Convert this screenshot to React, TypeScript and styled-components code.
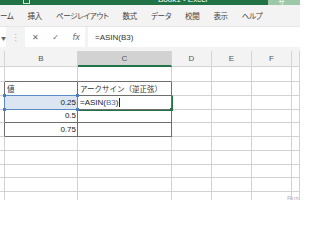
import React from 'react';
import styled, { createGlobalStyle, css } from 'styled-components';

const GlobalStyle = createGlobalStyle`
  html, body {
    margin: 0;
    padding: 0;
    background: #ffffff;
  }
  body {
    font-family: "Noto Sans CJK JP", "Liberation Sans", sans-serif;
  }
`;

const Window = styled.div`
  width: 300px;
  height: 200px;
  position: relative;
  overflow: hidden;
  background: #ffffff;
`;

const TitleBar = styled.div`
  height: 5px;
  background: #217346;
  display: flex;
  align-items: flex-end;
  overflow: hidden;
`;

const QuickIcon = styled.div`
  margin-left: 23px;
  width: 7px;
  height: 9px;
  border: 1px solid #cfe3d6;
  box-sizing: border-box;
  margin-bottom: 1px;
`;

const TitleText = styled.div`
  margin-left: 128px;
  color: #ffffff;
  font-size: 8px;
  line-height: 8px;
  margin-bottom: 1px;
  font-family: "Liberation Sans", sans-serif;
  white-space: nowrap;
`;

const SignIn = styled.div`
  margin-left: auto;
  width: 32px;
  height: 5px;
  background: #9cc7a9;
  color: #ffffff;
  font-size: 7px;
  line-height: 4px;
  padding-left: 10px;
  box-sizing: border-box;
  overflow: hidden;
`;

const TabBar = styled.div`
  height: 21px;
  background: #f3f3f3;
  display: flex;
  align-items: center;
  gap: 14px;
  margin-left: -7px;
`;

const Tab = styled.span`
  font-size: 7.5px;
  color: #444444;
  font-feature-settings: "palt";
  white-space: nowrap;
  letter-spacing: -0.3px;
`;

const FormulaBar = styled.div`
  height: 21px;
  background: #f3f3f3;
  border-top: 1px solid #e6e6e6;
  display: flex;
  align-items: flex-start;
  padding-top: 0;
`;

const NameBox = styled.div`
  width: 6px;
  height: 20px;
  background: #ffffff;
  display: flex;
  align-items: center;
  justify-content: flex-end;
  color: #666;
  font-size: 5px;
`;

const Grip = styled.div`
  width: 19px;
  height: 20px;
  display: flex;
  align-items: center;
  justify-content: center;
  color: #b0b0b0;
  font-size: 8px;
  font-family: "DejaVu Sans", sans-serif;
`;

const FnBox = styled.div`
  width: 60px;
  height: 20px;
  background: #ffffff;
  display: flex;
  align-items: center;
  justify-content: space-between;
  padding: 0 5px 0 7px;
  box-sizing: border-box;
  color: #6a6a6a;
`;

const FnGlyph = styled.span<{ $italic?: boolean }>`
  font-size: 8px;
  font-family: "DejaVu Sans", sans-serif;
  font-style: ${p => (p.$italic ? 'italic' : 'normal')};
`;

const FormulaInput = styled.div`
  margin-left: 3px;
  flex: 1;
  height: 20px;
  background: #ffffff;
  display: flex;
  align-items: center;
  padding-left: 7px;
  font-family: "Liberation Sans", sans-serif;
  font-size: 8px;
  color: #333333;
`;

const Gap = styled.div`
  height: 3px;
  background: #f3f3f3;
`;

const widths = [5, 73, 94, 40, 40, 40, 8];

const HeaderRow = styled.div`
  display: flex;
  height: 16px;
`;

const ColHeader = styled.div<{ $active?: boolean }>`
  flex: none;
  background: ${p => (p.$active ? '#d2d2d2' : '#f3f3f3')};
  border-right: 1px solid #d4d4d4;
  border-bottom: ${p => (p.$active ? '2px solid #217346' : '1px solid #d4d4d4')};
  box-sizing: border-box;
  color: #555555;
  font-family: "Liberation Sans", sans-serif;
  font-size: 8px;
  display: flex;
  align-items: center;
  justify-content: center;
`;

const SheetRow = styled.div<{ $h: number }>`
  display: flex;
  height: ${p => p.$h}px;
`;

const Cell = styled.div<{
  $r?: boolean;
  $b?: boolean;
  $align?: 'left' | 'right';
  $sel?: 'range' | 'edit';
}>`
  flex: none;
  position: relative;
  box-sizing: border-box;
  height: 100%;
  border-right: 1px solid ${p => (p.$r ? '#6e6e6e' : '#d2d2d2')};
  border-bottom: 1px solid ${p => (p.$b ? '#6e6e6e' : '#d2d2d2')};
  display: flex;
  align-items: center;
  justify-content: ${p => (p.$align === 'right' ? 'flex-end' : 'flex-start')};
  padding: 0 1px 0 2px;
  white-space: nowrap;
  color: #222222;
  font-family: "Liberation Sans", "Noto Sans CJK JP", sans-serif;
  font-size: 8px;
  ${p =>
    p.$sel === 'range' &&
    css`
      background: #dce6f3;
      &::after {
        content: '';
        position: absolute;
        left: -1px;
        top: -1px;
        right: -1px;
        bottom: -1px;
        border: 1px solid #5a8bc9;
        pointer-events: none;
      }
    `}
  ${p =>
    p.$sel === 'edit' &&
    css`
      &::after {
        content: '';
        position: absolute;
        left: -1px;
        top: -1px;
        right: -2px;
        bottom: -2px;
        border: 1.5px solid #217346;
        border-top-color: transparent;
        border-left-color: transparent;
        pointer-events: none;
      }
    `}
`;

const Handle = styled.span<{ $x: 'l' | 'r'; $y: 't' | 'b'; $c: string }>`
  position: absolute;
  width: 3px;
  height: 3px;
  background: ${p => p.$c};
  ${p => (p.$x === 'l' ? 'left: -2px;' : 'right: -2px;')}
  ${p => (p.$y === 't' ? 'top: -2px;' : 'bottom: -2px;')}
  z-index: 2;
`;

const JpText = styled.span`
  font-family: "Noto Sans CJK JP", sans-serif;
  font-size: 7.5px;
  color: #333333;
`;

const RefText = styled.span`
  color: #3c6fb8;
`;

const Caret = styled.span`
  display: inline-block;
  width: 1px;
  height: 9px;
  background: #222;
  margin-left: 1px;
`;

const Watermark = styled.div`
  position: absolute;
  right: 1px;
  bottom: -2px;
  color: #b5b5b5;
  font-size: 7px;
  font-family: "Liberation Sans", sans-serif;
`;

const cols = ['', 'B', 'C', 'D', 'E', 'F', ''];

type Row = { b?: React.ReactNode; c?: React.ReactNode };

const rows: Row[] = [
  {},
  { b: <JpText>値</JpText>, c: <JpText>アークサイン（逆正弦）</JpText> },
  { b: '0.25', c: 'formula' },
  { b: '0.5' },
  { b: '0.75' },
  {},
  {},
  {},
  {},
  {},
];

export default function App() {
  return (
    <>
      <GlobalStyle />
      <Window>
        <TitleBar>
          <QuickIcon />
          <TitleText>Book1 - Excel</TitleText>
          <SignIn>サ</SignIn>
        </TitleBar>
        <TabBar>
          <Tab>ホーム</Tab>
          <Tab>挿入</Tab>
          <Tab>ページレイアウト</Tab>
          <Tab>数式</Tab>
          <Tab>データ</Tab>
          <Tab>校閲</Tab>
          <Tab>表示</Tab>
          <Tab>ヘルプ</Tab>
        </TabBar>
        <FormulaBar>
          <NameBox>▼</NameBox>
          <Grip>⋮</Grip>
          <FnBox>
            <FnGlyph>✕</FnGlyph>
            <FnGlyph>✓</FnGlyph>
            <FnGlyph $italic>fx</FnGlyph>
          </FnBox>
          <FormulaInput>=ASIN(B3)</FormulaInput>
        </FormulaBar>
        <Gap />
        <HeaderRow>
          {cols.map((c, i) => (
            <ColHeader key={'h' + i} $active={c === 'C'} style={{ width: widths[i] }}>
              {c}
            </ColHeader>
          ))}
        </HeaderRow>
        {rows.map((r, ri) => {
          const inTable = ri >= 1 && ri <= 4;
          const aboveTable = ri === 0;
          return (
            <SheetRow key={ri} $h={ri === 0 ? 15 : 13.75}>
              <Cell $r={inTable} style={{ width: widths[0] }} />
              <Cell
                style={{ width: widths[1] }}
                $r={inTable}
                $b={inTable || aboveTable}
                $align={ri >= 2 && ri <= 4 ? 'right' : 'left'}
                $sel={ri === 2 ? 'range' : undefined}
              >
                {r.b}
                {ri === 2 && (
                  <>
                    <Handle $x="l" $y="t" $c="#4a7ebf" />
                    <Handle $x="r" $y="t" $c="#4a7ebf" />
                    <Handle $x="l" $y="b" $c="#4a7ebf" />
                    <Handle $x="r" $y="b" $c="#4a7ebf" />
                  </>
                )}
              </Cell>
              <Cell
                style={{ width: widths[2] }}
                $r={inTable}
                $b={inTable || aboveTable}
                $sel={ri === 2 ? 'edit' : undefined}
              >
                {r.c === 'formula' ? (
                  <>
                    =ASIN(<RefText>B3</RefText>)<Caret />
                    <Handle $x="r" $y="b" $c="#217346" />
                  </>
                ) : (
                  r.c
                )}
              </Cell>
              {widths.slice(3).map((w, ci) => (
                <Cell key={ci} style={{ width: w }} />
              ))}
            </SheetRow>
          );
        })}
        <Watermark>Bus</Watermark>
      </Window>
    </>
  );
}
